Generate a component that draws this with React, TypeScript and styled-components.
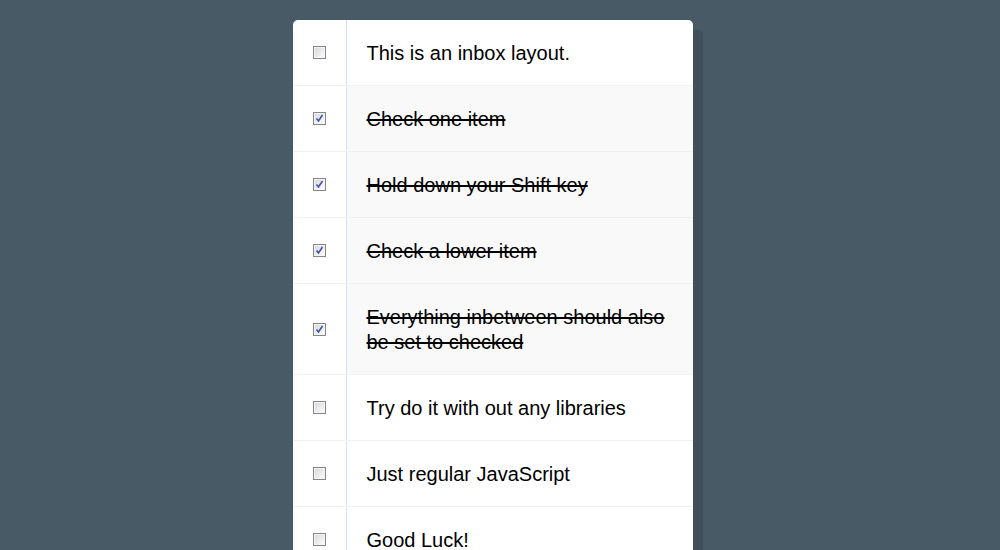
import React, { useState } from "react";
import styled, { createGlobalStyle } from "styled-components";

const GlobalStyle = createGlobalStyle`
  html {
    background: #485a65;
  }
  body {
    margin: 0;
    padding-right: 15px;
    font-family: "Liberation Sans", Arial, sans-serif;
  }
`;

const Inbox = styled.div`
  width: 400px;
  margin: 20px auto;
  background: white;
  border-radius: 5px;
  box-shadow: 10px 10px 0 rgba(0, 0, 0, 0.1);
`;

const Item = styled.label`
  display: flex;
  align-items: center;
  border-bottom: 1px solid #f1f1f1;
  cursor: pointer;

  &:last-child {
    border-bottom: 0;
  }
`;

const HiddenInput = styled.input`
  position: absolute;
  opacity: 0;
  width: 0;
  height: 0;
  margin: 0;
`;

const Box = styled.span`
  flex: none;
  width: 13px;
  height: 13px;
  margin: 20px;
  box-sizing: border-box;
  border: 1px solid #868686;
  background: linear-gradient(135deg, #d4d4da 0%, #ececf0 55%, #ffffff 100%);
  box-shadow: inset 0 0 0 1px #f4f4f4;
  display: flex;
  align-items: center;
  justify-content: center;

  svg {
    display: block;
  }
`;

const Text = styled.p<{ $done: boolean }>`
  margin: 0;
  padding: 21px 20px 19px;
  flex: 1;
  font-size: 20px;
  line-height: 25px;
  color: #000;
  border-left: 1px solid #d1e2ff;
  background: ${(p) => (p.$done ? "#f9f9f9" : "transparent")};
  text-decoration: ${(p) => (p.$done ? "line-through" : "none")};
  transition: background 0.2s;
`;

const items = [
  "This is an inbox layout.",
  "Check one item",
  "Hold down your Shift key",
  "Check a lower item",
  "Everything inbetween should also be set to checked",
  "Try do it with out any libraries",
  "Just regular JavaScript",
  "Good Luck!",
  "Don't forget to tweet your result!",
];

const Check = () => (
  <svg width="9" height="9" viewBox="0 0 9 9">
    <path d="M1.5 4.5 L3.5 7 L7.5 1" fill="none" stroke="#3d55a8" strokeWidth="1.6" />
  </svg>
);

export default function App() {
  const [checked, setChecked] = useState<boolean[]>(
    items.map((_, i) => i >= 1 && i <= 4)
  );
  const [last, setLast] = useState<number | null>(null);

  const toggle = (i: number, shift: boolean) => {
    const next = [...checked];
    const value = !next[i];
    next[i] = value;
    if (shift && last !== null && value) {
      const [a, b] = last < i ? [last, i] : [i, last];
      for (let k = a; k <= b; k++) next[k] = true;
    }
    setChecked(next);
    setLast(i);
  };

  return (
    <>
      <GlobalStyle />
      <Inbox>
        {items.map((text, i) => (
          <Item
            key={text}
            onClick={(e) => {
              e.preventDefault();
              toggle(i, e.shiftKey);
            }}
          >
            <HiddenInput type="checkbox" checked={checked[i]} readOnly />
            <Box>{checked[i] && <Check />}</Box>
            <Text $done={checked[i]}>{text}</Text>
          </Item>
        ))}
      </Inbox>
    </>
  );
}
